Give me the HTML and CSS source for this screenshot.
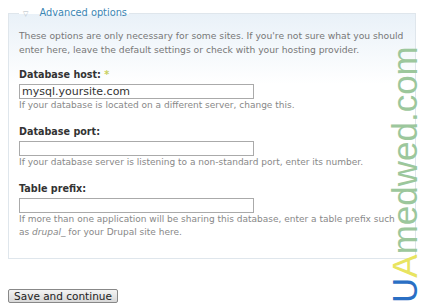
FILE: index.html
```html
<!DOCTYPE html>
<html lang="en">
<head>
  <meta charset="UTF-8">
  <title>Database configuration</title>
  <link rel="stylesheet" href="styles.css">
</head>
<body>
  <form id="installForm">
    <fieldset class="options">
      <legend><span class="toggle">&#9661;</span>Advanced options</legend>
      <p class="intro">These options are only necessary for some sites. If you're not sure what you should enter here, leave the default settings or check with your hosting provider.</p>

      <div class="field">
        <label for="host">Database host: <span class="required">*</span></label>
        <input type="text" id="host" value="mysql.yoursite.com">
        <div class="hint">If your database is located on a different server, change this.</div>
      </div>

      <div class="field">
        <label for="port">Database port:</label>
        <input type="text" id="port">
        <div class="hint">If your database server is listening to a non-standard port, enter its number.</div>
      </div>

      <div class="field">
        <label for="prefix">Table prefix:</label>
        <input type="text" id="prefix">
        <div class="hint">If more than one application will be sharing this database, enter a table prefix such as <em>drupal_</em> for your Drupal site here.</div>
      </div>
    </fieldset>

    <button type="submit" class="save">Save and continue</button>
  </form>

  <!-- watermark -->
  <div class="watermark"><span class="u">U</span><span class="a">A</span>medwed.com</div>
</body>
</html>
```

FILE: styles.css
```css
body {
  margin: 8px;
  font-family: "DejaVu Sans", Verdana, sans-serif;
  font-size: 9px;
  color: #555;
  background-color: #fff;
}

.options {
  margin: 0;
  padding: 10px 10px 19px 10px;
  border: 1px solid #dfe6ec;
  background: linear-gradient(to bottom, #e9f1f8 0px, #ffffff 70px);
  width: 386px;
}

.options legend {
  padding: 0 2px;
  color: #3b86b4;
  font-size: 9.8px;
  line-height: 10px;
}

.toggle {
  color: #b0bac2;
  font-size: 7px;
  margin-left: 2px;
  margin-right: 11px;
}

.intro {
  margin: 0 0 12px 0;
  line-height: 14px;
  color: #777;
  font-size: 9.2px;
}

.field {
  margin-bottom: 14px;
}

.field:last-child {
  margin-bottom: 0;
}

.field label {
  display: block;
  font-weight: bold;
  color: #333;
  font-size: 9.6px;
  line-height: 12px;
  margin-bottom: 3px;
}

.required {
  color: #c8d060;
}

.field input {
  display: block;
  width: 235px;
  height: 15px;
  box-sizing: border-box;
  margin: 0;
  border: 1px solid #aaa;
  padding: 0 2px;
  font-family: "DejaVu Sans", Verdana, sans-serif;
  font-size: 11px;
  color: #333;
}

.hint {
  color: #888;
  font-size: 9px;
  line-height: 13px;
}

.save {
  margin-top: 30px;
  height: 14px;
  width: 110px;
  padding: 0;
  border: 1px solid #888;
  border-radius: 2px;
  background: linear-gradient(to bottom, #f4f4f4, #d8d8d8);
  font-family: "DejaVu Sans", Verdana, sans-serif;
  font-size: 10.5px;
  line-height: 12px;
  color: #222;
}

.watermark {
  position: absolute;
  left: 389px;
  top: 303px;
  transform: rotate(-90deg);
  transform-origin: 0 0;
  font-family: "Liberation Sans", Arial, sans-serif;
  font-size: 35px;
  line-height: 32px;
  color: #9cc79c;
  white-space: nowrap;
}

.watermark .u {
  color: #2a6fc4;
}

.watermark .a {
  color: #e8e460;
}
```
